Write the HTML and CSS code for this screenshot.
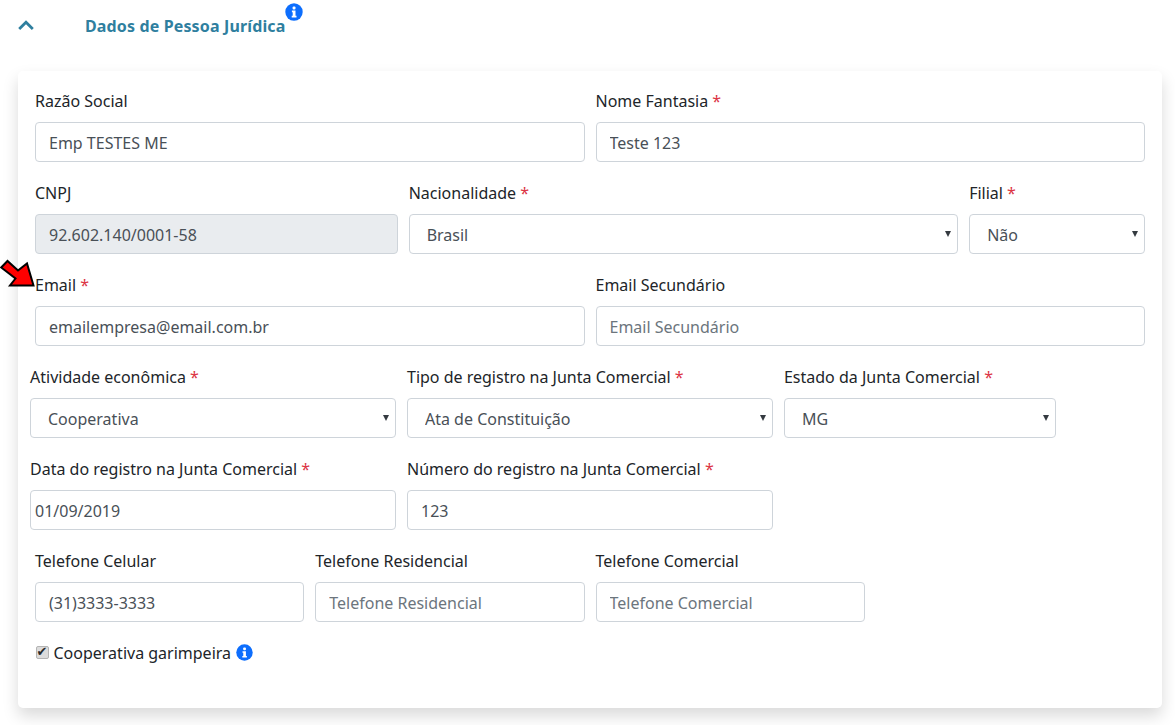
FILE: index.html
```html
<!DOCTYPE html>
<html lang="pt-BR">
<head>
    <meta charset="UTF-8">
    <title>Dados de Pessoa Jurídica</title>
    <link rel="stylesheet" href="styles.css">
</head>
<body>
    <div class="section-header">
        <svg class="chevron" viewBox="0 0 16 10" width="16" height="10"><path d="M1.2 9 8 2.2 14.8 9" fill="none" stroke="#2f7f9f" stroke-width="2.8"/></svg>
        <span class="section-title">Dados de Pessoa Jurídica</span>
        <svg class="info info-top" viewBox="0 0 18 18" width="18" height="18"><circle cx="9" cy="9" r="8.7" fill="#0d6efd"/><rect x="7.6" y="3.6" width="2.9" height="2.9" rx="1" fill="#fff"/><path d="M6.9 7.6h3.6v5.2h1v1.6H6.7v-1.6h1V9.2h-.8z" fill="#fff"/></svg>
    </div>

    <div class="card">
        <div class="row">
            <div class="col col-6">
                <label>Razão Social</label>
                <input class="field" type="text" value="Emp TESTES ME">
            </div>
            <div class="col col-6">
                <label>Nome Fantasia <span class="req">*</span></label>
                <input class="field" type="text" value="Teste 123">
            </div>
        </div>
        <div class="row">
            <div class="col col-4">
                <label>CNPJ</label>
                <input class="field" type="text" value="92.602.140/0001-58" disabled>
            </div>
            <div class="col col-6">
                <label>Nacionalidade <span class="req">*</span></label>
                <div class="select-wrap"><select class="field"><option>Brasil</option></select></div>
            </div>
            <div class="col col-2">
                <label>Filial <span class="req">*</span></label>
                <div class="select-wrap"><select class="field"><option>Não</option></select></div>
            </div>
        </div>
        <div class="row">
            <div class="col col-6">
                <label>Email <span class="req">*</span></label>
                <svg class="arrow" viewBox="0 0 36 30" width="36" height="30"><path d="M1.2 9.5 7.5 3 18 12.5l9-7 6.5 22H10l5.5-7z" fill="#f00" stroke="#000" stroke-width="2"/></svg>
                <input class="field" type="text" value="emailempresa@email.com.br">
            </div>
            <div class="col col-6">
                <label>Email Secundário</label>
                <input class="field" type="text" placeholder="Email Secundário">
            </div>
        </div>
        <div class="row nested">
            <div class="col col-4">
                <label>Atividade econômica <span class="req">*</span></label>
                <div class="select-wrap"><select class="field"><option>Cooperativa</option></select></div>
            </div>
            <div class="col col-4">
                <label>Tipo de registro na Junta Comercial <span class="req">*</span></label>
                <div class="select-wrap"><select class="field"><option>Ata de Constituição</option></select></div>
            </div>
            <div class="col col-3">
                <label>Estado da Junta Comercial <span class="req">*</span></label>
                <div class="select-wrap"><select class="field"><option>MG</option></select></div>
            </div>
        </div>
        <div class="row nested">
            <div class="col col-4">
                <label>Data do registro na Junta Comercial <span class="req">*</span></label>
                <input class="field field-date" type="text" value="01/09/2019">
            </div>
            <div class="col col-4">
                <label>Número do registro na Junta Comercial <span class="req">*</span></label>
                <input class="field" type="text" value="123">
            </div>
        </div>
        <div class="row">
            <div class="col col-3">
                <label>Telefone Celular</label>
                <input class="field" type="text" value="(31)3333-3333">
            </div>
            <div class="col col-3">
                <label>Telefone Residencial</label>
                <input class="field" type="text" placeholder="Telefone Residencial">
            </div>
            <div class="col col-3">
                <label>Telefone Comercial</label>
                <input class="field" type="text" placeholder="Telefone Comercial">
            </div>
        </div>
        <div class="check-line">
            <input class="check" type="checkbox" checked disabled>
            <span class="check-label">Cooperativa garimpeira</span>
            <svg class="info" viewBox="0 0 18 18" width="17" height="17"><circle cx="9" cy="9" r="8.7" fill="#0d6efd"/><rect x="7.6" y="3.6" width="2.9" height="2.9" rx="1" fill="#fff"/><path d="M6.9 7.6h3.6v5.2h1v1.6H6.7v-1.6h1V9.2h-.8z" fill="#fff"/></svg>
        </div>
    </div>
</body>
</html>
```
FILE: styles.css
```css
* {
    box-sizing: border-box;
}
html, body {
    min-height: 725px;
}
body {
    margin: 0;
    background-color: #fff;
    font-family: "Noto Sans", sans-serif;
    font-size: 16px;
    color: #212529;
}
.section-header {
    height: 71px;
    padding: 15px 0 0 18px;
    display: flex;
    align-items: flex-start;
}
.chevron {
    margin-top: 5px;
}
.section-title {
    margin-left: 51px;
    font-size: 16px;
    line-height: 22px;
    font-weight: 700;
    letter-spacing: 0.14px;
    color: #2f7f9f;
}
.info-top {
    margin-top: -12px;
}
.card {
    width: 1144px;
    height: 637px;
    margin-left: 18px;
    padding: 17px 12px 0;
    background-color: #fff;
    border-radius: 5px;
    box-shadow: 0 8px 16px rgba(0,0,0,0.15);
}
.row {
    display: flex;
    margin: 0 -0.5px 18px;
}
.row.nested {
    margin-left: -5.5px;
    margin-right: -5.5px;
}
.col {
    position: relative;
    padding: 0 5.5px;
}
.col-2 { width: 16.6667%; }
.col-3 { width: 25%; }
.col-4 { width: 33.3333%; }
.col-6 { width: 50%; }
label {
    display: block;
    height: 24px;
    margin-bottom: 10px;
    line-height: 26px;
}
.req {
    color: #dc3545;
}
.field {
    display: block;
    width: 100%;
    height: 40px;
    padding: 2px 13px 0;
    border: 1px solid #ced4da;
    border-radius: 4px;
    background-color: #fff;
    font-family: inherit;
    font-size: 16px;
    color: #495057;
}
.field::placeholder {
    color: #6c757d;
    opacity: 1;
}
.field:disabled {
    background-color: #e9ecef;
}
.field-date {
    padding-left: 4px;
}
select.field {
    appearance: none;
    padding-left: 17px;
}
.select-wrap {
    position: relative;
}
.select-wrap::after {
    content: "";
    position: absolute;
    top: 17px;
    right: 7px;
    border-left: 3.5px solid transparent;
    border-right: 3.5px solid transparent;
    border-top: 6px solid #343a40;
}
.arrow {
    position: absolute;
    top: -14px;
    left: -29.5px;
}
.check-line {
    display: flex;
    align-items: center;
    margin: 0 0 0 5.5px;
    height: 24px;
}
.check {
    appearance: none;
    position: relative;
    width: 13px;
    height: 13px;
    margin: 0 5px 0 0;
    border: 1px solid #b4b4b4;
    border-radius: 2px;
    background-color: #dcdcdc;
}
.check::before {
    content: "\2714";
    position: absolute;
    top: -3px;
    left: 0;
    font-family: "DejaVu Sans", sans-serif;
    font-size: 13px;
    line-height: 16px;
    color: #2b2b2b;
}
.check-label {
    padding-top: 2px;
}
.check-line .info {
    margin-left: 5px;
}
```
